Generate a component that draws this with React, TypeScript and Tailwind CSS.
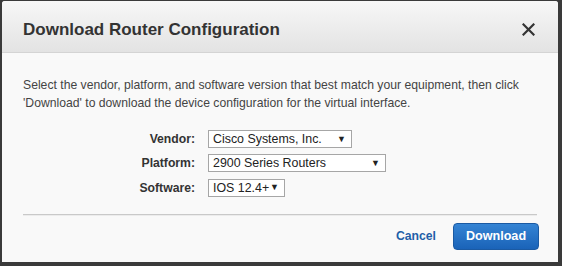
export default function App() {
  const rows = [
    { label: 'Vendor:', value: 'Cisco Systems, Inc.', width: 'w-[144px]' },
    { label: 'Platform:', value: '2900 Series Routers', width: 'w-[178px]' },
    { label: 'Software:', value: 'IOS 12.4+', width: 'w-[77px]' },
  ]

  return (
    <div className="w-[562px] h-[266px] overflow-hidden bg-[#3a3a3a] pl-[2px] pt-[1px] pr-[4px] pb-[4px] font-['Liberation_Sans',Arial,sans-serif]">
      <div className="h-full bg-[#f9f9f9] rounded-tl-[3px] rounded-tr-[3px] flex flex-col">
        {/* Header */}
        <div className="h-[52px] shrink-0 flex items-center justify-between pl-[21px] pr-[23px] pt-[7px] bg-gradient-to-b from-[#f7f7f7] to-[#e3e3e3] border-b border-[#d4d4d4] rounded-tl-[3px] rounded-tr-[3px]">
          <h1 className="text-[17px] font-bold text-[#333]">Download Router Configuration</h1>
          <svg width="13" height="13" viewBox="0 0 13 13" className="mb-[1px]">
            <path d="M1.5 1.5 L11.5 11.5 M11.5 1.5 L1.5 11.5" stroke="#333" strokeWidth="2.2" strokeLinecap="square" />
          </svg>
        </div>

        {/* Body */}
        <div className="px-[21px] pt-[23px]">
          <p className="text-[12.2px] leading-[18px] text-[#444] whitespace-nowrap">
            Select the vendor, platform, and software version that best match your equipment, then click
            <br />
            'Download' to download the device configuration for the virtual interface.
          </p>

          <div className="mt-[18px] flex flex-col gap-[6px]">
            {rows.map((r) => (
              <div key={r.label} className="flex items-center">
                <div className="w-[172px] text-right text-[12.2px] font-bold text-[#333]">{r.label}</div>
                <div
                  className={`ml-[13px] h-[18px] ${r.width} bg-white border border-[#a6a6a6] flex items-center justify-between pl-[4px] pr-[5px] text-[12.4px] text-[#222] whitespace-nowrap`}
                >
                  <span className="leading-none">{r.value}</span>
                  <span className="text-[9px] leading-none">▼</span>
                </div>
              </div>
            ))}
          </div>

          <div className="mt-[17px] h-[2px] border-t border-[#c9c9c9] border-b border-b-[#ececec]" />

          <div className="mt-[7px] flex items-center justify-end gap-[17px] mr-[-2px]">
            <span className="text-[12.2px] font-bold text-[#1f5fa8]">Cancel</span>
            <div className="w-[86px] h-[27px] rounded-[4px] bg-gradient-to-b from-[#3584d4] to-[#1a63b8] border border-[#1b5aa3] flex items-center justify-center text-[12.6px] font-bold text-white">
              Download
            </div>
          </div>
        </div>
      </div>
    </div>
  )
}
